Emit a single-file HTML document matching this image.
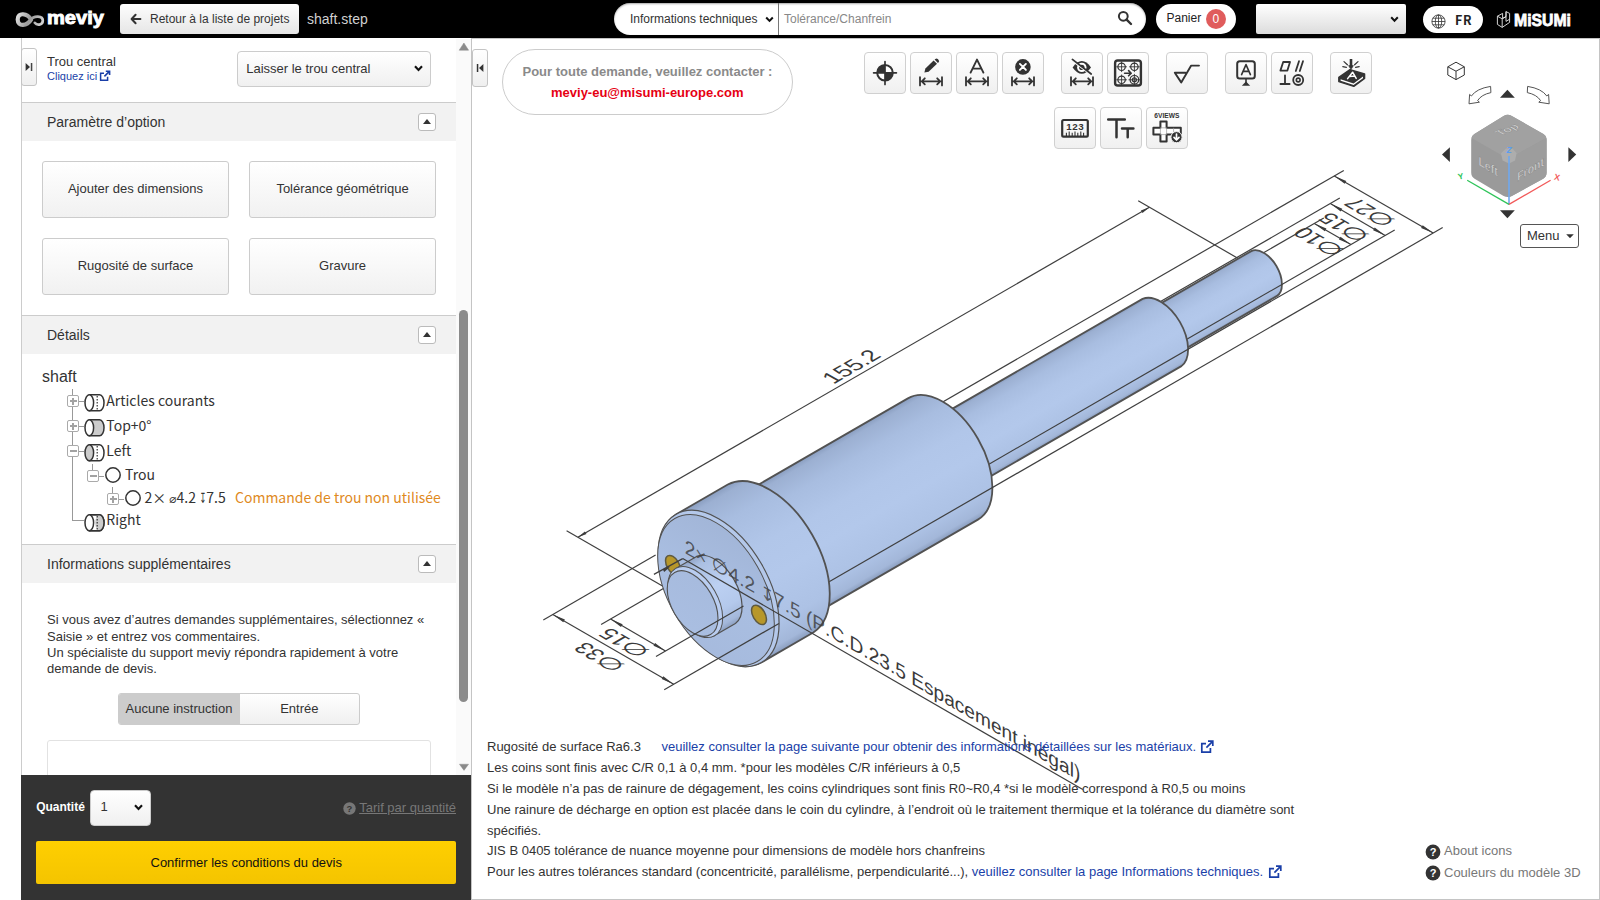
<!DOCTYPE html>
<html lang="fr">
<head>
<meta charset="utf-8">
<title>meviy - shaft.step</title>
<style>
*{box-sizing:border-box;margin:0;padding:0}
html,body{width:1600px;height:900px;overflow:hidden;background:#fff}
body{position:relative;font-family:"Liberation Sans",Arial,Helvetica,sans-serif;font-size:13px;color:#333;line-height:1.25}
.abs{position:absolute}
.t{position:absolute;white-space:nowrap;line-height:1}
a{color:#1a3fa8;text-decoration:none}
/* header */
#hdr{position:absolute;left:0;top:0;width:1600px;height:38px;background:#000}
.gbtn{background:linear-gradient(#ffffff,#e9e9e9);border:1px solid #c8c8c8;border-radius:3px}
#back{position:absolute;left:120px;top:4px;width:179px;height:30px;border-radius:3px;background:linear-gradient(#fdfdfd,#e6e6e6)}
#search{position:absolute;left:614px;top:3px;width:532px;height:31.5px;border-radius:16px;background:#fff;box-shadow:inset 0 1px 2px rgba(0,0,0,.35)}
#panier{position:absolute;left:1156px;top:4px;width:80px;height:30px;border-radius:15px;background:#fff}
#hsel{position:absolute;left:1256px;top:4px;width:150px;height:30px;border-radius:2px;background:linear-gradient(#ffffff,#dcdcdc)}
#lang{position:absolute;left:1423px;top:6px;width:60px;height:27px;border-radius:14px;background:#fff}
/* left panel */
#lp{position:absolute;left:21px;top:38px;width:450px;height:862px;border-left:1px solid #ccc;background:#fff}
.sech{position:absolute;left:22px;width:434px;height:39px;border-top:1px solid #ccc;background:#f2f2f2}
.sech span{position:absolute;left:25px;top:11px;font-size:14px;line-height:16px;white-space:nowrap;color:#333}
.sech i{position:absolute;left:396px;top:10px;width:18px;height:18px;border:1px solid #bbb;border-radius:3px;background:#fff}
.sech i:after{content:"";position:absolute;left:4px;top:5px;border-left:4px solid transparent;border-right:4px solid transparent;border-bottom:5px solid #333}
.obtn{position:absolute;width:187px;height:57px;border:1px solid #ccc;border-radius:3px;background:linear-gradient(#ffffff,#f1f1f1);font-size:13px;line-height:53px;text-align:center;color:#333;white-space:nowrap}
.tree{font-family:"Noto Sans CJK JP","Noto Sans CJK SC","Liberation Sans",sans-serif;font-size:14px;color:#333}
.exp{position:absolute;width:12px;height:12px;border:1px solid #aaa;border-radius:2px;background:#fff}
.exp:before{content:"";position:absolute;left:1.5px;top:4.2px;width:7px;height:1.6px;background:#a2a2a2}
.exp.plus:after{content:"";position:absolute;left:4.2px;top:1.5px;width:1.6px;height:7px;background:#a2a2a2}
.tl{position:absolute;background:#999}
.dj{font-family:"DejaVu Sans","Liberation Sans",sans-serif;font-weight:400;font-size:12px}
/* footer */
#foot{position:absolute;left:21px;top:775px;width:450px;height:125px;background:#333}
/* viewer */
#vw{position:absolute;left:471px;top:38px;width:1129px;height:862px;border:1px solid #c4c4c4;background:#fff}
.tb{position:absolute;width:42px;height:42px;border:1px solid #d0d0d0;border-radius:4px;background:linear-gradient(#ffffff,#f0f0f0)}
.tb svg{position:absolute;left:-1px;top:-1px}
#notes{position:absolute;left:487px;top:737.2px;width:830px;font-size:13px;line-height:20.83px;color:#333}
#notes a{color:#1a3fa8}
</style>
</head>
<body>
<div id="hdr">
  <svg class="abs" style="left:0;top:0" width="120" height="38" viewBox="0 0 120 38">
    <defs>
      <linearGradient id="rib" gradientUnits="userSpaceOnUse" x1="15" y1="12" x2="44" y2="27">
        <stop offset="0" stop-color="#f2f2f2"/><stop offset=".5" stop-color="#9a9a9a"/><stop offset="1" stop-color="#e0e0e0"/>
      </linearGradient>
    </defs>
    <path d="M31 19.6 C27.6 13.4 17.6 11.6 17.7 19.5 C17.8 27.4 27.2 26 31 19.6" fill="none" stroke="url(#rib)" stroke-width="4.2" stroke-linecap="round"/>
    <path d="M30.6 20 C33.6 15.2 43 15.4 42.8 20.8 C42.6 25.6 36.6 25.4 34.8 22.8" fill="none" stroke="url(#rib)" stroke-width="2.7" stroke-linecap="round"/>
    <text x="47" y="24.2" font-family="Liberation Sans, Arial, sans-serif" font-weight="700" font-size="18.5" fill="#fff" stroke="#fff" stroke-width="0.9" textLength="57" lengthAdjust="spacingAndGlyphs">meviy</text>
  </svg>
  <div id="back">
    <svg class="abs" style="left:10px;top:9px" width="12" height="12" viewBox="0 0 12 12"><path d="M5.6 1.8 L1.6 6 L5.6 10.2 M1.8 6 H10.4" fill="none" stroke="#333" stroke-width="2" stroke-linecap="round" stroke-linejoin="round"/></svg>
    <span class="t" style="left:30px;top:9px;font-size:12px;color:#333">Retour à la liste de projets</span>
  </div>
  <span class="t" style="left:307px;top:11.5px;font-size:14px;color:#d0d0d0">shaft.step</span>
  <div id="search">
    <span class="t" style="left:16px;top:9.5px;font-size:12px;color:#333">Informations techniques</span>
    <svg class="abs" style="left:151px;top:13px" width="9" height="7" viewBox="0 0 9 7"><path d="M1.2 1.5 L4.5 4.9 L7.8 1.5" fill="none" stroke="#111" stroke-width="2"/></svg>
    <div class="abs" style="left:164px;top:0;width:1px;height:32px;background:#777"></div>
    <span class="t" style="left:170px;top:9.5px;font-size:12px;color:#888">Tolérance/Chanfrein</span>
    <svg class="abs" style="left:503px;top:7px" width="16" height="16" viewBox="0 0 16 16"><circle cx="6.3" cy="6.3" r="4.4" fill="none" stroke="#333" stroke-width="2"/><path d="M9.6 9.6 L14 14" stroke="#333" stroke-width="2.4" stroke-linecap="round"/></svg>
  </div>
  <div id="panier">
    <span class="t" style="left:10.5px;top:7.5px;font-size:12px;color:#222">Panier</span>
    <div class="abs" style="left:50px;top:4.5px;width:20px;height:20px;border-radius:10px;background:#e05c5c"></div>
    <span class="t" style="left:56.5px;top:8.5px;font-size:12px;color:#fff">0</span>
  </div>
  <div id="hsel">
    <svg class="abs" style="left:134px;top:12px" width="9" height="7" viewBox="0 0 9 7"><path d="M1.2 1.3 L4.5 4.7 L7.8 1.3" fill="none" stroke="#111" stroke-width="2"/></svg>
  </div>
  <div id="lang">
    <svg class="abs" style="left:8px;top:7.5px" width="15" height="15" viewBox="0 0 15 15" fill="none" stroke="#333" stroke-width=".8"><circle cx="7.5" cy="7.5" r="6.6"/><ellipse cx="7.5" cy="7.5" rx="3.2" ry="6.6"/><path d="M7.5 .9 V14.1 M.9 7.5 H14.1 M1.8 4.2 H13.2 M1.8 10.8 H13.2"/></svg>
    <span class="t" style="left:32px;top:7.5px;font-size:12.5px;font-weight:700;color:#222;letter-spacing:.6px;font-family:'Noto Sans CJK JP','Liberation Sans',sans-serif">FR</span>
  </div>
  <svg class="abs" style="left:1494px;top:8px" width="84" height="24" viewBox="0 0 84 24">
    <g fill="none" stroke="#e8e8e8" stroke-width=".9" stroke-linejoin="round">
      <path d="M3.4 8.2 L8.6 5.4 L8.6 10.4 L12 8.6 L12 3.6 L15.6 5.4 L15.6 14.4 L8.2 19.4 L3.4 16.4 Z"/>
      <path d="M3.4 8.2 L8.2 10.8 L8.2 19.4 M8.2 10.8 L12 8.6 M12 3.6 L12 13.4 L15.6 11.2"/>
    </g>
    <text x="20" y="17.6" font-family="Liberation Sans, Arial, sans-serif" font-weight="700" font-size="17" fill="#fff" stroke="#fff" stroke-width=".8" textLength="57" lengthAdjust="spacingAndGlyphs">MiSUMi</text>
  </svg>
</div>
<div id="lp"></div>
<!-- top row -->
<div class="abs gbtn" style="left:21px;top:48px;width:16px;height:38px;border-color:#c4c4c4;background:linear-gradient(#fff,#efefef)">
  <svg class="abs" style="left:3px;top:13px" width="9" height="10" viewBox="0 0 9 10"><path d="M.6 1 L5 5 L.6 9 Z" fill="#333"/><rect x="5.8" y="1" width="1.5" height="8" fill="#444"/></svg>
</div>
<span class="t" style="left:47px;top:54.9px;font-size:13px">Trou central</span>
<a class="t" style="left:47px;top:71px;font-size:11px">Cliquez ici</a>
<svg class="abs" style="left:99px;top:69.5px" width="12" height="12" viewBox="0 0 12 12" fill="none" stroke="#1a3fa8" stroke-width="1.5"><path d="M8.6 6.8 V10.2 H1.6 V3.2 H5"/><path d="M6.8 1.2 H10.6 V5 M10.4 1.4 L5.4 6.4" stroke-width="1.6"/></svg>
<div class="abs" style="left:237px;top:51px;width:194px;height:36px;border:1px solid #ccc;border-radius:4px;background:linear-gradient(#fff,#f0f0f0)">
  <span class="t" style="left:8.2px;top:10.2px;font-size:13px">Laisser le trou central</span>
  <svg class="abs" style="left:176px;top:13px" width="9" height="7" viewBox="0 0 9 7"><path d="M1 1.2 L4.5 5 L8 1.2" fill="none" stroke="#111" stroke-width="2.1"/></svg>
</div>
<!-- Paramètre d'option -->
<div class="sech" style="top:102px"><span>Paramètre d’option</span><i></i></div>
<div class="obtn" style="left:42px;top:161px">Ajouter des dimensions</div>
<div class="obtn" style="left:249px;top:161px">Tolérance géométrique</div>
<div class="obtn" style="left:42px;top:238px">Rugosité de surface</div>
<div class="obtn" style="left:249px;top:238px">Gravure</div>
<!-- Détails -->
<div class="sech" style="top:315px"><span>Détails</span><i></i></div>
<span class="t" style="left:42px;top:368.5px;font-size:16px;color:#333">shaft</span>
<div class="tree">
  <!-- connector lines -->
  <div class="tl" style="left:72px;top:389px;width:1px;height:132px"></div>
  <div class="tl" style="left:78px;top:401px;width:6px;height:1px"></div>
  <div class="tl" style="left:78px;top:426px;width:6px;height:1px"></div>
  <div class="tl" style="left:78px;top:451px;width:6px;height:1px"></div>
  <div class="tl" style="left:72px;top:520px;width:12px;height:1px"></div>
  <div class="tl" style="left:92px;top:464px;width:1px;height:6px"></div>
  <div class="tl" style="left:98px;top:476px;width:6px;height:1px"></div>
  <div class="tl" style="left:112px;top:487px;width:1px;height:6px"></div>
  <div class="tl" style="left:118px;top:499px;width:6px;height:1px"></div>
  <div class="exp plus" style="left:67px;top:395px"></div>
  <div class="exp plus" style="left:67px;top:420px"></div>
  <div class="exp" style="left:67px;top:445px"></div>
  <div class="exp" style="left:87px;top:470px"></div>
  <div class="exp plus" style="left:107px;top:493px"></div>
  <!-- cylinder icons -->
  <svg class="abs" style="left:83px;top:392px" width="24" height="22" viewBox="0 0 24 22"><path d="M6.3 2.8 H16.6 A4.4 8 0 0 1 16.6 18.8 H6.3 Z" fill="#fff" stroke="#333" stroke-width="1.5"/><path d="M14.2 4 V18" stroke="#333" stroke-width="1.2" stroke-dasharray="1.4 1.6"/><ellipse cx="6.3" cy="10.8" rx="4.3" ry="8" fill="#fff" stroke="#333" stroke-width="1.5"/></svg>
  <svg class="abs" style="left:83px;top:417px" width="24" height="22" viewBox="0 0 24 22"><path d="M6.3 2.8 H16.6 A4.4 8 0 0 1 16.6 18.8 H6.3 Z" fill="#ccc" stroke="#333" stroke-width="1.5"/><ellipse cx="6.3" cy="10.8" rx="4.3" ry="8" fill="#fff" stroke="#333" stroke-width="1.5"/></svg>
  <svg class="abs" style="left:83px;top:442px" width="24" height="22" viewBox="0 0 24 22"><path d="M6.3 2.8 H16.6 A4.4 8 0 0 1 16.6 18.8 H6.3 Z" fill="#fff" stroke="#333" stroke-width="1.5"/><path d="M14.2 4 V18" stroke="#333" stroke-width="1.2" stroke-dasharray="1.4 1.6"/><ellipse cx="6.3" cy="10.8" rx="4.3" ry="8" fill="#ccc" stroke="#333" stroke-width="1.5"/></svg>
  <svg class="abs" style="left:83px;top:512px" width="24" height="22" viewBox="0 0 24 22"><path d="M6.3 2.8 H16.6 A4.4 8 0 0 1 16.6 18.8 H6.3 Z" fill="#fff" stroke="#333" stroke-width="1.5"/><path d="M16.6 2.8 A4.4 8 0 0 1 16.6 18.8 A4.4 8 0 0 1 16.6 2.8 Z" fill="#ccc" stroke="none"/><path d="M6.3 2.8 H16.6 A4.4 8 0 0 1 16.6 18.8 H6.3" fill="none" stroke="#333" stroke-width="1.5"/><path d="M14.2 4 V18" stroke="#333" stroke-width="1.2" stroke-dasharray="1.4 1.6"/><ellipse cx="6.3" cy="10.8" rx="4.3" ry="8" fill="#fff" stroke="#333" stroke-width="1.5"/></svg>
  <svg class="abs" style="left:104px;top:466px" width="18" height="18" viewBox="0 0 18 18"><circle cx="9" cy="9" r="7.2" fill="#fff" stroke="#333" stroke-width="1.5"/></svg>
  <svg class="abs" style="left:124px;top:489px" width="18" height="18" viewBox="0 0 18 18"><circle cx="9" cy="9" r="7.2" fill="#fff" stroke="#333" stroke-width="1.5"/></svg>
  <span class="t" style="left:106.3px;top:392.8px">Articles courants</span>
  <span class="t" style="left:106.3px;top:417.6px">Top+0°</span>
  <span class="t" style="left:106.3px;top:442.5px">Left</span>
  <span class="t" style="left:125px;top:467.3px">Trou</span>
  <span class="t" style="left:144.4px;top:490.3px">2× <b class="dj">⌀</b>4.2 <b class="dj" style="display:inline-block;font-size:14px;transform:scaleX(.58);margin:0 -2.4px 0 -2.2px">↧</b>7.5</span>
  <span class="t" style="left:235px;top:490.3px;color:#e08a1e">Commande de trou non utilisée</span>
  <span class="t" style="left:106.3px;top:512.4px">Right</span>
</div>
<!-- Informations supplémentaires -->
<div class="sech" style="top:544px"><span>Informations supplémentaires</span><i></i></div>
<div class="abs" style="left:47px;top:612.4px;width:400px;font-size:13px;line-height:16.25px;color:#333">Si vous avez d’autres demandes supplémentaires, sélectionnez «<br>Saisie » et entrez vos commentaires.<br>Un spécialiste du support meviy répondra rapidement à votre<br>demande de devis.</div>
<div class="abs" style="left:118px;top:693px;width:242px;height:32px;border:1px solid #ccc;border-radius:3px;background:linear-gradient(#fff,#f0f0f0);overflow:hidden">
  <div class="abs" style="left:0;top:0;width:121px;height:30px;background:#ccc"></div>
  <span class="t" style="left:6.5px;top:7.7px;font-size:13px;color:#333">Aucune instruction</span>
  <span class="t" style="left:161.2px;top:7.7px;font-size:13px;color:#333">Entrée</span>
</div>
<div class="abs" style="left:47px;top:740px;width:384px;height:60px;border:1px solid #e2e2e2;border-radius:3px;background:#fff"></div>
<!-- scrollbar -->
<div class="abs" style="left:456px;top:39px;width:15px;height:736px;background:#fafafa"></div>
<div class="abs" style="left:459px;top:310px;width:9px;height:392px;border-radius:4.5px;background:#8b8b8b"></div>
<svg class="abs" style="left:458px;top:42px" width="12" height="9" viewBox="0 0 12 9"><path d="M1.2 8.2 L5.9 1 L10.6 8.2 Z" fill="#8a8a8a" stroke="#8a8a8a" stroke-width=".5" stroke-linejoin="round"/></svg>
<svg class="abs" style="left:458px;top:763px" width="12" height="9" viewBox="0 0 12 9"><path d="M1.4 1.2 L6 7.4 L10.6 1.2 Z" fill="#8a8a8a" stroke="#8a8a8a" stroke-width=".4" stroke-linejoin="round"/></svg>
<!-- footer -->
<div id="foot">
  <span class="t" style="left:15.2px;top:26.2px;font-size:12px;font-weight:700;color:#fff">Quantité</span>
  <div class="abs" style="left:69px;top:15px;width:61px;height:36px;border:1px solid #ccc;border-radius:4px;background:linear-gradient(#fff,#f0f0f0)">
    <span class="t" style="left:9.4px;top:9.4px;font-size:13px;color:#333">1</span>
    <svg class="abs" style="left:43px;top:13.4px" width="9" height="7" viewBox="0 0 9 7"><path d="M1 1.2 L4.5 5 L8 1.2" fill="none" stroke="#111" stroke-width="2.1"/></svg>
  </div>
  <svg class="abs" style="left:322px;top:27px" width="13" height="13" viewBox="0 0 13 13"><circle cx="6.5" cy="6.5" r="6.2" fill="#777"/><text x="6.5" y="10" text-anchor="middle" font-family="Liberation Sans, Arial, sans-serif" font-weight="700" font-size="9.5" fill="#333">?</text></svg>
  <span class="t" style="left:338.2px;top:26px;font-size:13px;color:#777;text-decoration:underline">Tarif par quantité</span>
  <div class="abs" style="left:15px;top:66px;width:420px;height:43px;border-radius:2px;background:linear-gradient(#ffcf00,#f4c400);text-align:center">
    <span class="t" style="left:114.5px;top:15.2px;font-size:13px;color:#111">Confirmer les conditions du devis</span>
  </div>
</div>
<div id="vw"></div>
<svg class="abs" style="left:0;top:0" width="1600" height="900" viewBox="0 0 1600 900"><defs><linearGradient id="g1" gradientUnits="userSpaceOnUse" x1="1149.1" y1="310.1" x2="1175.0" y2="354.9"><stop offset="0" stop-color="#8a9ec0"/><stop offset="0.04" stop-color="#9cb0d2"/><stop offset="0.18" stop-color="#a8bde0"/><stop offset="0.4" stop-color="#b1c6e9"/><stop offset="0.6" stop-color="#b3c8eb"/><stop offset="0.85" stop-color="#adc2e5"/><stop offset="0.96" stop-color="#a3b7d9"/><stop offset="1" stop-color="#8a9dbe"/></linearGradient><linearGradient id="g2" gradientUnits="userSpaceOnUse" x1="923.5" y1="425.4" x2="962.3" y2="492.6"><stop offset="0" stop-color="#8a9ec0"/><stop offset="0.04" stop-color="#9cb0d2"/><stop offset="0.18" stop-color="#a8bde0"/><stop offset="0.4" stop-color="#b1c6e9"/><stop offset="0.6" stop-color="#b3c8eb"/><stop offset="0.85" stop-color="#adc2e5"/><stop offset="0.96" stop-color="#a3b7d9"/><stop offset="1" stop-color="#8a9dbe"/></linearGradient><linearGradient id="g3" gradientUnits="userSpaceOnUse" x1="735.6" y1="497.9" x2="805.5" y2="619.1"><stop offset="0" stop-color="#8a9ec0"/><stop offset="0.04" stop-color="#9cb0d2"/><stop offset="0.18" stop-color="#a8bde0"/><stop offset="0.4" stop-color="#b1c6e9"/><stop offset="0.6" stop-color="#b3c8eb"/><stop offset="0.85" stop-color="#adc2e5"/><stop offset="0.96" stop-color="#a3b7d9"/><stop offset="1" stop-color="#8a9dbe"/></linearGradient><linearGradient id="g4" gradientUnits="userSpaceOnUse" x1="675.9" y1="514.5" x2="761.3" y2="662.5"><stop offset="0" stop-color="#8a9ec0"/><stop offset="0.04" stop-color="#9cb0d2"/><stop offset="0.18" stop-color="#a8bde0"/><stop offset="0.4" stop-color="#b1c6e9"/><stop offset="0.6" stop-color="#b3c8eb"/><stop offset="0.85" stop-color="#adc2e5"/><stop offset="0.96" stop-color="#a3b7d9"/><stop offset="1" stop-color="#8a9dbe"/></linearGradient><linearGradient id="g5" gradientUnits="userSpaceOnUse" x1="673.3" y1="516.0" x2="758.7" y2="664.0"><stop offset="0" stop-color="#9fb2d4"/><stop offset="0.5" stop-color="#a9bee1"/><stop offset="1" stop-color="#a5b9dc"/></linearGradient><linearGradient id="g6" gradientUnits="userSpaceOnUse" x1="675.8" y1="568.4" x2="714.6" y2="635.6"><stop offset="0" stop-color="#93a6c8"/><stop offset="0.1" stop-color="#aabfe2"/><stop offset="0.45" stop-color="#bcd0f2"/><stop offset="0.75" stop-color="#b4c9ec"/><stop offset="0.93" stop-color="#a4b8da"/><stop offset="1" stop-color="#8c9fc0"/></linearGradient><linearGradient id="g7" gradientUnits="userSpaceOnUse" x1="673.2" y1="569.9" x2="712.0" y2="637.1"><stop offset="0" stop-color="#a6badd"/><stop offset="1" stop-color="#aabfe2"/></linearGradient></defs><path d="M893.4 430.4 L1343.8 170.4" stroke="#3f3f3f" stroke-width="1.2" fill="none"/>
<path d="M1134.5 316.6 L1339.8 198.1" stroke="#3f3f3f" stroke-width="1.2" fill="none"/>
<path d="M1245.9 262.9 L1323.8 217.9" stroke="#3f3f3f" stroke-width="1.2" fill="none"/>
<path d="M665.1 587.6 L566.6 530.8" stroke="#3f3f3f" stroke-width="1.2" fill="none"/>
<path d="M1245.9 262.9 L1138.2 200.8" stroke="#3f3f3f" stroke-width="1.2" fill="none"/>
<path d="M577.9 537.2 L1149.4 207.2" stroke="#3f3f3f" stroke-width="1.2" fill="none"/>
<path d="M577.9 537.2 L584.9 531.4 L586.5 534.1 Z" fill="#3c3c3c"/>
<path d="M1149.4 207.2 L1142.5 213.1 L1140.9 210.4 Z" fill="#3c3c3c"/>
<path d="M655.6 555.1 L543.3 619.9" stroke="#3f3f3f" stroke-width="1.2" fill="none"/>
<path d="M665.1 587.6 L601.1 624.6" stroke="#3f3f3f" stroke-width="1.2" fill="none"/>
<path d="M1175.0 354.9 L1277.1 295.9 A25.9 15.0 60 0 0 1251.2 251.1 L1149.1 310.1 A25.9 15.0 60 0 0 1175.0 354.9 Z" fill="url(#g1)" stroke="#525252" stroke-width="1.8" stroke-linejoin="round"/>
<path d="M1180.3 343.1 L1360.5 239.1" stroke="#3f3f3f" stroke-width="1.2" fill="none"/>
<path d="M962.3 492.6 L1181.4 366.1 A38.9 22.4 60 0 0 1142.6 298.9 L923.5 425.4 A38.9 22.4 60 0 0 962.3 492.6 Z" fill="url(#g2)" stroke="#525252" stroke-width="1.8" stroke-linejoin="round"/>
<path d="M970.4 474.9 L1394.7 229.9" stroke="#3f3f3f" stroke-width="1.2" fill="none"/>
<path d="M805.5 619.1 L977.9 519.6 A69.9 40.4 60 0 0 907.9 398.4 L735.6 497.9 A69.9 40.4 60 0 0 805.5 619.1 Z" fill="url(#g3)" stroke="#525252" stroke-width="1.8" stroke-linejoin="round"/>
<path d="M820.0 587.1 L1442.7 227.6" stroke="#3f3f3f" stroke-width="1.2" fill="none"/>
<path d="M761.3 662.5 L813.3 632.5 A85.5 49.4 60 0 0 727.8 484.5 L675.9 514.5 A85.5 49.4 60 0 0 761.3 662.5 Z" fill="url(#g4)" stroke="#525252" stroke-width="1.8" stroke-linejoin="round"/>
<ellipse cx="718.6" cy="588.5" rx="85.5" ry="49.4" transform="rotate(60 718.6 588.5)" fill="#b4c8ea" stroke="#525252" stroke-width="1.2" />
<ellipse cx="716.0" cy="590.0" rx="82.5" ry="47.6" transform="rotate(60 716.0 590.0)" fill="url(#g5)" stroke="#525252" stroke-width="1.0" />
<ellipse cx="673.0" cy="565.1" rx="10.6" ry="6.1" transform="rotate(60 673.0 565.1)" fill="#b7972a" stroke="#5f5a40" stroke-width="1.5" />
<ellipse cx="759.0" cy="614.9" rx="10.6" ry="6.1" transform="rotate(60 759.0 614.9)" fill="#b7972a" stroke="#5f5a40" stroke-width="1.5" />
<path d="M714.6 635.6 L735.4 623.6 A38.9 22.4 60 0 0 696.6 556.4 L675.8 568.4 A38.9 22.4 60 0 0 714.6 635.6 Z" fill="url(#g6)" stroke="#525252" stroke-width="1.2" stroke-linejoin="round"/>
<ellipse cx="695.2" cy="602.0" rx="38.9" ry="22.4" transform="rotate(60 695.2 602.0)" fill="#b9cdf0" stroke="#525252" stroke-width="1.0" />
<ellipse cx="692.6" cy="603.5" rx="35.9" ry="20.7" transform="rotate(60 692.6 603.5)" fill="url(#g7)" stroke="#525252" stroke-width="1.1" />
<path d="M779.0 623.4 L664.2 689.7" stroke="#3f3f3f" stroke-width="1.2" fill="none"/>
<path d="M743.5 605.9 L656.0 656.4" stroke="#3f3f3f" stroke-width="1.2" fill="none"/>
<path d="M1314.3 223.4 L1350.9 244.6" stroke="#3f3f3f" stroke-width="1.2" fill="none"/>
<path d="M1314.3 223.4 L1326.4 228.5 L1324.8 231.3 Z" fill="#3c3c3c"/>
<path d="M1350.9 244.6 L1338.9 239.5 L1340.5 236.7 Z" fill="#3c3c3c"/>
<path d="M1330.3 203.6 L1385.2 235.4" stroke="#3f3f3f" stroke-width="1.2" fill="none"/>
<path d="M1330.3 203.6 L1342.3 208.8 L1340.7 211.5 Z" fill="#3c3c3c"/>
<path d="M1385.2 235.4 L1373.1 230.2 L1374.7 227.5 Z" fill="#3c3c3c"/>
<path d="M1334.3 175.9 L1433.2 233.1" stroke="#3f3f3f" stroke-width="1.2" fill="none"/>
<path d="M1334.3 175.9 L1346.3 181.1 L1344.7 183.8 Z" fill="#3c3c3c"/>
<path d="M1433.2 233.1 L1421.1 227.9 L1422.7 225.2 Z" fill="#3c3c3c"/>
<path d="M610.6 619.1 L665.5 650.9" stroke="#3f3f3f" stroke-width="1.2" fill="none"/>
<path d="M610.6 619.1 L622.6 624.3 L621.0 627.0 Z" fill="#3c3c3c"/>
<path d="M665.5 650.9 L653.5 645.7 L655.1 643.0 Z" fill="#3c3c3c"/>
<path d="M552.8 614.4 L673.7 684.2" stroke="#3f3f3f" stroke-width="1.2" fill="none"/>
<path d="M552.8 614.4 L564.9 619.5 L563.3 622.3 Z" fill="#3c3c3c"/>
<path d="M673.7 684.2 L661.7 679.1 L663.3 676.3 Z" fill="#3c3c3c"/>
<path d="M653.9 574.4 L682.7 558.6" stroke="#3f3f3f" stroke-width="1.2" fill="none"/>
<path d="M682.7 558.6 L1082.8 789.6" stroke="#3f3f3f" stroke-width="1.2" fill="none"/>
<path d="M670.4 566.6 L664.2 571.9 L662.7 569.3 Z" fill="#3c3c3c"/>
<text transform="matrix(0.8660 -0.5000 0.8660 0.5000 857.9 370.4)" font-family="Liberation Sans, Arial, sans-serif" font-size="22.5" text-anchor="middle" fill="#3a3a3a" >155.2</text>
<text transform="matrix(-1.0566 -0.6100 0.8660 -0.5000 1346.2 250.1)"  font-size="22" text-anchor="start" fill="#3a3a3a" font-family="DejaVu Sans, Liberation Sans, sans-serif">∅</text>
<text transform="matrix(-0.8660 -0.5000 0.8660 -0.5000 1326.0 238.4)" font-family="Liberation Sans, Arial, sans-serif" font-size="22" text-anchor="start" fill="#3a3a3a" >10</text>
<text transform="matrix(-1.0566 -0.6100 0.8660 -0.5000 1371.4 235.6)"  font-size="22" text-anchor="start" fill="#3a3a3a" font-family="DejaVu Sans, Liberation Sans, sans-serif">∅</text>
<text transform="matrix(-0.8660 -0.5000 0.8660 -0.5000 1351.1 223.9)" font-family="Liberation Sans, Arial, sans-serif" font-size="22" text-anchor="start" fill="#3a3a3a" >15</text>
<text transform="matrix(-1.0566 -0.6100 0.8660 -0.5000 1397.3 220.6)"  font-size="22" text-anchor="start" fill="#3a3a3a" font-family="DejaVu Sans, Liberation Sans, sans-serif">∅</text>
<text transform="matrix(-0.8660 -0.5000 0.8660 -0.5000 1377.1 208.9)" font-family="Liberation Sans, Arial, sans-serif" font-size="22" text-anchor="start" fill="#3a3a3a" >27</text>
<text transform="matrix(-1.0566 -0.6100 0.8660 -0.5000 651.7 651.1)"  font-size="22" text-anchor="start" fill="#3a3a3a" font-family="DejaVu Sans, Liberation Sans, sans-serif">∅</text>
<text transform="matrix(-0.8660 -0.5000 0.8660 -0.5000 631.4 639.4)" font-family="Liberation Sans, Arial, sans-serif" font-size="22" text-anchor="start" fill="#3a3a3a" >15</text>
<text transform="matrix(-1.0566 -0.6100 0.8660 -0.5000 626.9 665.4)"  font-size="22" text-anchor="start" fill="#3a3a3a" font-family="DejaVu Sans, Liberation Sans, sans-serif">∅</text>
<text transform="matrix(-0.8660 -0.5000 0.8660 -0.5000 606.6 653.7)" font-family="Liberation Sans, Arial, sans-serif" font-size="22" text-anchor="start" fill="#3a3a3a" >33</text>
<text transform="matrix(0.9570 0.5525 0.0000 1.0000 684.7 553.1)" font-family="Liberation Sans, Arial, sans-serif" font-size="20" text-anchor="start" fill="#3a3a3a" ><tspan fill-opacity=".8">2× <tspan font-family="DejaVu Sans, Liberation Sans, sans-serif">∅</tspan>4.2 <tspan font-family="DejaVu Sans, Liberation Sans, sans-serif" font-size="17">↧</tspan>7.5 (P</tspan>.C.D.23.5 Espacement inégal)</text></svg>
<div class="abs gbtn" style="left:472px;top:49px;width:16px;height:38px;border-color:#c4c4c4;background:linear-gradient(#fff,#efefef)">
  <svg class="abs" style="left:3px;top:13px" width="9" height="10" viewBox="0 0 9 10"><path d="M7.4 1 L3 5 L7.4 9 Z" fill="#333"/><rect x=".8" y="1" width="1.5" height="8" fill="#333"/></svg>
</div>
<div class="abs" style="left:502px;top:49px;width:291px;height:66px;border:1px solid #ccc;border-radius:33px;background:#fff">
  <span class="t" style="left:19.5px;top:14.6px;font-size:13px;font-weight:700;color:#8a8a8a">Pour toute demande, veuillez contacter :</span>
  <span class="t" style="left:48px;top:36px;font-size:13px;font-weight:700;color:#e60012">meviy-eu@misumi-europe.com</span>
</div>
<div class="tb" style="left:864px;top:52px"><svg width="42" height="42" viewBox="0 0 42 42"><g><circle cx="21" cy="20.8" r="7.8" fill="#fff" stroke="#333" stroke-width="2"/>
<path d="M21 20.8 V13 A7.8 7.8 0 0 0 13.2 20.8 Z M21 20.8 V28.6 A7.8 7.8 0 0 0 28.8 20.8 Z" fill="#333"/>
<path d="M21 9.6 V32.4 M9.6 20.8 H32.4" stroke="#333" stroke-width="1.7" stroke-linecap="round"/></g></svg></div>
<div class="tb" style="left:910px;top:52px"><svg width="42" height="42" viewBox="0 0 42 42"><g stroke="#333" stroke-width="1.8" fill="none" stroke-linecap="round" stroke-linejoin="round"><path d="M10 25.2 V33.4 M32 25.2 V33.4 M11.6 29.3 H30.4 M14.8 26.3 L11.8 29.3 L14.8 32.3 M27.2 26.3 L30.2 29.3 L27.2 32.3"/></g><path d="M14.4 20.6 L15.4 16.4 L23.6 8.6 L27 11.8 L18.6 19.8 Z" fill="#333"/><path d="M24.6 7.6 L25.4 6.9 Q26.6 6 27.8 7.1 L28.6 7.9 Q29.6 9.1 28.6 10.2 L27.9 10.9 Z" fill="#333"/></svg></div>
<div class="tb" style="left:956px;top:52px"><svg width="42" height="42" viewBox="0 0 42 42"><g stroke="#333" stroke-width="1.8" fill="none" stroke-linecap="round" stroke-linejoin="round"><path d="M10 25.2 V33.4 M32 25.2 V33.4 M11.6 29.3 H30.4 M14.8 26.3 L11.8 29.3 L14.8 32.3 M27.2 26.3 L30.2 29.3 L27.2 32.3"/></g><path d="M14.6 20.6 L21 7.6 L27.4 20.6 M16.8 16.6 H25.2" fill="none" stroke="#333" stroke-width="1.9" stroke-linecap="round" stroke-linejoin="round"/></svg></div>
<div class="tb" style="left:1002px;top:52px"><svg width="42" height="42" viewBox="0 0 42 42"><g stroke="#333" stroke-width="1.8" fill="none" stroke-linecap="round" stroke-linejoin="round"><path d="M10 25.2 V33.4 M32 25.2 V33.4 M11.6 29.3 H30.4 M14.8 26.3 L11.8 29.3 L14.8 32.3 M27.2 26.3 L30.2 29.3 L27.2 32.3"/></g><circle cx="20.9" cy="14.9" r="7.8" fill="#333"/><path d="M17.9 11.9 L23.9 17.9 M23.9 11.9 L17.9 17.9" stroke="#fff" stroke-width="1.9" stroke-linecap="round"/></svg></div>
<div class="tb" style="left:1061px;top:52px"><svg width="42" height="42" viewBox="0 0 42 42"><g stroke="#333" stroke-width="1.8" fill="none" stroke-linecap="round" stroke-linejoin="round"><path d="M10 25.2 V33.4 M32 25.2 V33.4 M11.6 29.3 H30.4 M14.8 26.3 L11.8 29.3 L14.8 32.3 M27.2 26.3 L30.2 29.3 L27.2 32.3"/></g><path d="M11.6 15.4 Q20.8 2.6 30 15.4 Q20.8 28.2 11.6 15.4 Z" fill="#333"/>
<circle cx="20.8" cy="15.4" r="4.7" fill="#fff"/><circle cx="20.8" cy="15.4" r="2.7" fill="#333"/>
<path d="M10.6 8.4 L30.4 23.2" stroke="#f7f7f7" stroke-width="1.4"/>
<path d="M11.4 7.4 L30.2 22" stroke="#333" stroke-width="1.7" stroke-linecap="round"/></svg></div>
<div class="tb" style="left:1107px;top:52px"><svg width="42" height="42" viewBox="0 0 42 42"><rect x="8.1" y="8.5" width="25.8" height="25" rx="2.6" fill="none" stroke="#333" stroke-width="2.4"/><circle cx="14.6" cy="14.8" r="3.7" fill="none" stroke="#333" stroke-width="1.2"/><path d="M14.6 9.500000000000002 V20.1 M9.299999999999999 14.8 H19.900000000000002" stroke="#333" stroke-width=".9"/><circle cx="27.4" cy="14.8" r="3.7" fill="none" stroke="#333" stroke-width="1.2"/><path d="M27.4 9.500000000000002 V20.1 M22.099999999999998 14.8 H32.699999999999996" stroke="#333" stroke-width=".9"/><circle cx="14.6" cy="27.8" r="3.7" fill="none" stroke="#333" stroke-width="1.2"/><path d="M14.6 22.5 V33.1 M9.299999999999999 27.8 H19.900000000000002" stroke="#333" stroke-width=".9"/><circle cx="27.4" cy="27.8" r="4.3" fill="none" stroke="#333" stroke-width="1.2"/><path d="M27.4 21.9 V33.7 M21.499999999999996 27.8 H33.3" stroke="#333" stroke-width=".9"/><circle cx="27.4" cy="27.8" r="2" fill="none" stroke="#333" stroke-width="1.2"/><path d="M17.6 21.2 H24 M21.6 18.6 L24.2 21.2 L21.6 23.8" fill="none" stroke="#333" stroke-width="1.6" stroke-linecap="round" stroke-linejoin="round"/></svg></div>
<div class="tb" style="left:1166px;top:52px"><svg width="42" height="42" viewBox="0 0 42 42"><path d="M8.8 20.8 H19.4 M8.8 20.8 L15.2 30.4 L25.2 13.6 H33" fill="none" stroke="#333" stroke-width="1.9" stroke-linecap="round" stroke-linejoin="round"/></svg></div>
<div class="tb" style="left:1225px;top:52px"><svg width="42" height="42" viewBox="0 0 42 42"><rect x="12.2" y="9.2" width="17.6" height="17.4" rx="2.6" fill="none" stroke="#333" stroke-width="2"/><path d="M16.6 22.6 L21 12.6 L25.4 22.6 M18.2 19.4 H23.8" fill="none" stroke="#333" stroke-width="1.6" stroke-linecap="round" stroke-linejoin="round"/><path d="M21 27 V31" stroke="#333" stroke-width="1.6"/><path d="M21 29.6 L25.2 33.8 H16.8 Z" fill="#333"/></svg></div>
<div class="tb" style="left:1271px;top:52px"><svg width="42" height="42" viewBox="0 0 42 42"><g fill="none" stroke="#333" stroke-width="1.8" stroke-linejoin="round" stroke-linecap="round"><path d="M12.2 10 H19 L16.4 18.6 H9.4 Z"/><path d="M28 9.2 L24.8 19 M32 9.2 L28.8 19"/><path d="M14 23.4 V32 M9.4 32 H18.6"/><circle cx="27.2" cy="28" r="5"/><circle cx="27.2" cy="28" r="1.9" stroke-width="1.6"/></g></svg></div>
<div class="tb" style="left:1330px;top:52px"><svg width="42" height="42" viewBox="0 0 42 42"><g stroke-linejoin="round">
<path d="M8.8 25.4 L20 17.6 L34.6 22 L34.6 26.4 L23.8 34.4 L8.8 29.6 Z" fill="#333" stroke="#333" stroke-width="1.4"/>
<path d="M10.6 27.2 L23.6 31.4 L33 24.6 L33 26.2 L23.6 33 L10.6 28.8 Z" fill="#fff"/>
<path d="M17.6 26.6 L22.6 20.2 L26.2 26.4 M19.4 24.4 L24.6 24" fill="none" stroke="#fff" stroke-width="1.5" stroke-linecap="round"/>
<path d="M21 7 V15.4" stroke="#333" stroke-width="2.6"/><path d="M18.6 13.6 L21 17.6 L23.4 13.6 Z" fill="#333" stroke="#333" stroke-width=".6"/>
<path d="M14 9.6 L17.4 12.8 M28 9.6 L24.6 12.8 M12.8 14.6 L16.4 15.4 M29.2 14.6 L25.6 15.4" stroke="#333" stroke-width="1.2" stroke-linecap="round"/></g></svg></div>
<div class="tb" style="left:1054px;top:107px"><svg width="42" height="42" viewBox="0 0 42 42"><rect x="8.2" y="13" width="25.6" height="16.6" rx="1.4" fill="none" stroke="#333" stroke-width="2.2"/>
<path d="M12.4 29 V25.8 M15.2 29 V24.4 M18.2 29 V25.8 M21 29 V24.4 M23.8 29 V25.8 M26.8 29 V24.4 M29.6 29 V25.8" stroke="#333" stroke-width="1.1"/>
<text x="21.2" y="23" text-anchor="middle" font-family="Liberation Sans, Arial, sans-serif" font-weight="700" font-size="9.8" fill="#333" letter-spacing=".55">123</text></svg></div>
<div class="tb" style="left:1100px;top:107px"><svg width="42" height="42" viewBox="0 0 42 42"><path d="M8.2 12.6 H24.8 M16.5 12.6 V30.2 M22 21.6 H33.4 M27.7 21.6 V30.2" fill="none" stroke="#333" stroke-width="2.5" stroke-linecap="round"/></svg></div>
<div class="tb" style="left:1146px;top:107px"><svg width="42" height="42" viewBox="0 0 42 42"><text x="20.8" y="11" text-anchor="middle" font-family="Liberation Sans, Arial, sans-serif" font-weight="700" font-size="6.6" fill="#333" textLength="25" lengthAdjust="spacingAndGlyphs">6VIEWS</text>
<path d="M14.4 14.6 H20.6 V20.8 H34.8 V27.6 H20.6 V34.4 H14.4 V27.6 H7.4 V20.8 H14.4 Z" fill="#fff" stroke="#333" stroke-width="2" stroke-linejoin="round"/>
<path d="M14.4 20.8 H20.6 M14.4 27.6 H20.6 M14.4 20.8 V27.6 M20.6 20.8 V27.6 M27.6 20.8 V27.6" stroke="#999" stroke-width=".7"/>
<circle cx="30.5" cy="30.2" r="5.6" fill="#333" stroke="#f4f4f4" stroke-width="1"/>
<path d="M30.5 27 V32.4 M28 30.4 L30.5 33 L33 30.4" fill="none" stroke="#fff" stroke-width="1.7" stroke-linecap="round" stroke-linejoin="round"/></svg></div>
<svg class="abs" style="left:1430px;top:55px" width="160" height="170" viewBox="1430 55 160 170">
  <g fill="none" stroke="#333" stroke-width="1" stroke-linejoin="round">
    <path d="M1456 62.2 L1464.3 66.8 V75 L1456 79.6 L1447.8 75 V66.8 Z"/>
    <path d="M1447.8 66.8 L1456 71.2 L1464.3 66.8 M1456 71.2 V79.6"/>
  </g>
  <g fill="#333">
    <path d="M1500 97.8 H1514.8 L1507.4 89.8 Z"/>
    <path d="M1500 210.2 H1514.8 L1507.4 218.2 Z"/>
    <path d="M1449.9 147.2 V162 L1442 154.6 Z"/>
    <path d="M1568.4 147.2 V162 L1576.2 154.6 Z"/>
  </g>
  <g fill="#fff" stroke="#555" stroke-width="1" stroke-linejoin="round">
    <path d="M1490.6 86.4 Q1476.5 88.6 1471.4 96 L1469.6 94.4 L1469 103.8 L1479.4 102.2 L1477.6 100.6 Q1481.4 94.6 1490.9 92.6 Z"/>
    <path d="M1527.6 86.4 Q1541.7 88.6 1546.8 96 L1548.6 94.4 L1549.2 103.8 L1538.8 102.2 L1540.6 100.6 Q1536.8 94.6 1527.3 92.6 Z"/>
  </g>
  <!-- cube -->
  <path d="M1503.6 116 Q1507.7 113.4 1511.8 116 L1543.4 134 Q1546.6 136 1546.6 140 V172.6 Q1546.6 176.8 1543.2 178.8 L1511.8 196 Q1507.7 198.2 1503.6 196 L1474.6 178.8 Q1471.2 176.8 1471.2 172.6 V140 Q1471.2 136 1474.4 134 Z" fill="#9a9a9a"/>
  <path d="M1503.6 116 Q1507.7 113.4 1511.8 116 L1543.4 134 Q1546 135.6 1546.4 138 L1512.4 157 Q1508.6 159 1504.8 157 L1471.6 138 Q1472 135.6 1474.4 134 Z" fill="#a1a1a1"/>
  <path d="M1508.6 158.4 L1546.4 138 Q1546.6 139 1546.6 140 V172.6 Q1546.6 176.8 1543.2 178.8 L1511.8 196 Q1510.2 196.9 1508.6 197.2 Z" fill="#9d9d9d"/>
  <path d="M1501 153.2 L1506 148.6 H1512.4 L1516.6 153.2 L1515 160.4 L1509 163.4 L1502.6 160.4 Z" fill="#adadad"/>
  <g font-family="Liberation Sans, Arial, sans-serif" font-weight="700" fill="#d4d4d4" stroke="#808080" stroke-width=".45" text-anchor="middle">
    <text transform="matrix(.9 -.4 .8 .46 1510.6 131.6)" font-size="12.5">Top</text>
    <text transform="matrix(.84 .5 0 1 1488 170.6)" font-size="12.5">Left</text>
    <text transform="matrix(.84 -.5 0 1 1530.6 173.4)" font-size="12.5">Front</text>
  </g>
  <path d="M1509 156 V204.4" stroke="#6fa8ee" stroke-width="1.6"/>
  <path d="M1509 204.4 L1467.2 180.2" stroke="#2fc45a" stroke-width="1.3"/>
  <path d="M1509 204.4 L1550.6 180.2" stroke="#f25a5a" stroke-width="1.3"/>
  <g font-family="Liberation Sans, Arial, sans-serif" font-weight="700" font-size="8.5">
    <text x="1506.4" y="152.6" fill="#5b9df0" font-style="italic">Z</text>
    <text x="1457.8" y="179.4" fill="#2fc45a" transform="rotate(-12 1460 176)">Y</text>
    <text x="1554.4" y="180" fill="#f25a5a" transform="rotate(12 1557 177)">X</text>
  </g>
</svg>
<div class="abs" style="left:1520px;top:224px;width:59px;height:24px;border:1px solid #555;border-radius:3px;background:#fff">
  <span class="t" style="left:6px;top:4.2px;font-size:13px;color:#333">Menu</span>
  <svg class="abs" style="left:45px;top:9px" width="8" height="4.4" viewBox="0 0 8 4.4"><path d="M.2 .2 H7.8 L4 4.2 Z" fill="#333"/></svg>
</div>

<div id="notes">Rugosité de surface Ra6.3<a style="margin-left:20.5px">veuillez consulter la page suivante pour obtenir des informations détaillées sur les matériaux.</a> <svg width="14" height="14" viewBox="0 0 14 14" style="vertical-align:-3px;margin-left:0" fill="none" stroke="#1a3fa8" stroke-width="1.7"><path d="M10.4 8 V12.2 H1.8 V3.6 H6"/><path d="M8 1.2 H12.8 V6 M12.6 1.4 L6.4 7.6"/></svg><br>Les coins sont finis avec C/R 0,1 à 0,4 mm. *pour les modèles C/R inférieurs à 0,5<br>Si le modèle n’a pas de rainure de dégagement, les coins cylindriques sont finis R0~R0,4 *si le modèle correspond à R0,5 ou moins<br>Une rainure de décharge en option est placée dans le coin du cylindre, à l’endroit où le traitement thermique et la tolérance du diamètre sont spécifiés.<br>JIS B 0405 tolérance de nuance moyenne pour dimensions de modèle hors chanfreins<br>Pour les autres tolérances standard (concentricité, parallélisme, perpendicularité...), <a>veuillez consulter la page Informations techniques.</a> <svg width="14" height="14" viewBox="0 0 14 14" style="vertical-align:-3px;margin-left:1px" fill="none" stroke="#1a3fa8" stroke-width="1.7"><path d="M10.4 8 V12.2 H1.8 V3.6 H6"/><path d="M8 1.2 H12.8 V6 M12.6 1.4 L6.4 7.6"/></svg></div>
<svg class="abs" style="left:1425px;top:843.5px" width="16" height="16" viewBox="0 0 16 16"><circle cx="8" cy="8" r="7.4" fill="#333"/><text x="8" y="12" text-anchor="middle" font-family="Liberation Sans, Arial, sans-serif" font-weight="700" font-size="11" fill="#fff">?</text></svg>
<span class="t" style="left:1444px;top:844.4px;font-size:13px;color:#777">About icons</span>
<svg class="abs" style="left:1425px;top:864.5px" width="16" height="16" viewBox="0 0 16 16"><circle cx="8" cy="8" r="7.4" fill="#333"/><text x="8" y="12" text-anchor="middle" font-family="Liberation Sans, Arial, sans-serif" font-weight="700" font-size="11" fill="#fff">?</text></svg>
<span class="t" style="left:1444px;top:865.5px;font-size:13px;color:#777">Couleurs du modèle 3D</span>
</body>
</html>
